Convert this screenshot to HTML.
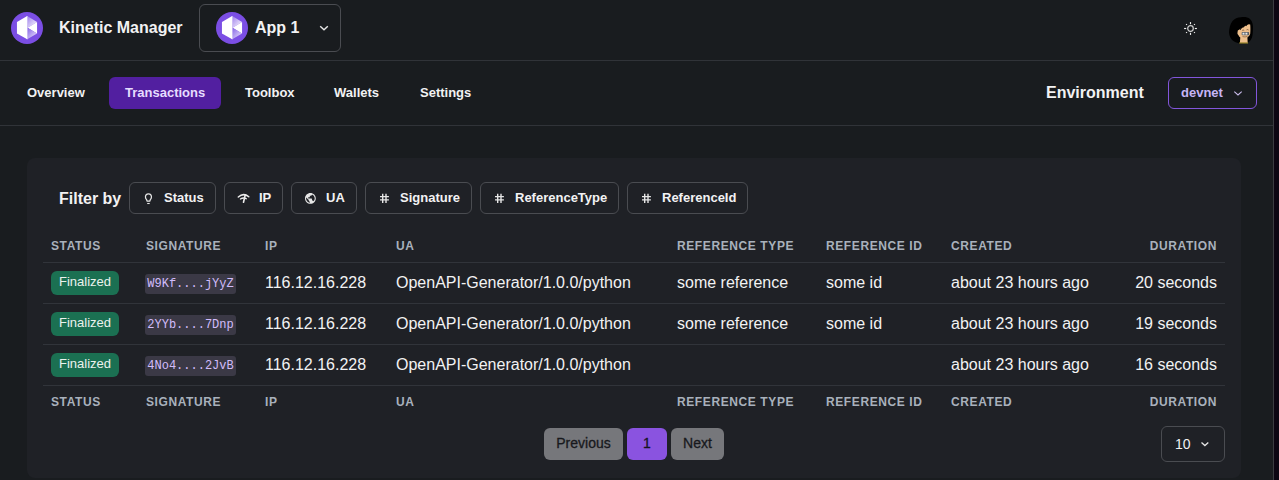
<!DOCTYPE html>
<html>
<head>
<meta charset="utf-8">
<style>
*{box-sizing:border-box;margin:0;padding:0}
html,body{width:1279px;height:480px;overflow:hidden;background:#0c0612}
body{font-family:"Liberation Sans",sans-serif;color:#f2f2f3;position:relative}
#app{position:absolute;left:0;top:0;width:1274px;height:480px;background:#191c1f;border-right:1px solid #3a3b40}
.abs{position:absolute}
.hline{position:absolute;left:0;width:1273px;height:1px;background:#303338}
.logo{position:absolute;width:32px;height:32px}
.title{position:absolute;left:59px;top:19px;font-size:16px;font-weight:700;line-height:18px;white-space:nowrap}
.appbox{position:absolute;left:199px;top:4px;width:142px;height:48px;border:1px solid #4a4c51;border-radius:6px}
.tab{position:absolute;top:77px;height:32px;line-height:31px;font-size:13px;font-weight:700;padding:0 16px;border-radius:6px;white-space:nowrap;color:#f2f2f3}
.tab.active{background:#521fa0;color:#e6dcff}
.env{position:absolute;left:1046px;top:84px;font-size:16px;font-weight:700;line-height:18px}
.devnet{position:absolute;left:1168px;top:77px;width:89px;height:32px;border:1px solid #8356dc;border-radius:6px;color:#c6b5f6;font-size:13px;font-weight:700;line-height:30px;padding-left:12px}
.card{position:absolute;left:27px;top:158px;width:1214px;height:320px;background:#1f2126;border-radius:8px}
.filterby{position:absolute;left:32px;top:32px;font-size:16px;font-weight:700;line-height:18px}
.fbtn{position:absolute;top:24px;height:32px;border:1px solid #4a4c51;border-radius:6px;font-size:13px;font-weight:700;line-height:30px;padding-left:34px;white-space:nowrap}
.fbtn svg{position:absolute;left:12px;top:8px;width:14px;height:14px}
table{position:absolute;left:16px;top:72px;width:1182px;border-collapse:collapse;table-layout:fixed}
th{font-size:12px;font-weight:700;text-transform:uppercase;letter-spacing:0.05em;color:#a9b1bc;line-height:16px;padding:8px;text-align:left;white-space:nowrap}
thead th{border-bottom:1px solid #31343a}
td{font-size:16px;padding:8px;height:41px;border-bottom:1px solid #31343a;white-space:nowrap;color:#f2f2f3;vertical-align:middle;line-height:24px}
.r{text-align:right}
.badge{display:inline-block;height:24px;line-height:22px;padding:0 8px;border-radius:6px;background:#1b7052;color:#ecf2ee;font-size:13px;vertical-align:top}
code{display:inline-block;font-family:"Liberation Mono",monospace;font-size:12px;letter-spacing:0;line-height:21px;height:20px;padding:0 2.3px;background:#3b3946;color:#d2bcfb;border-radius:3px;vertical-align:top;margin-top:3px;margin-left:-1px}
.pbtn{position:absolute;top:270px;height:32px;line-height:30px;font-size:14px;font-weight:400;border-radius:6px;text-align:center;color:#18191d;-webkit-text-stroke:0.3px #18191d}
.sel{position:absolute;left:1134px;top:268px;width:64px;height:36px;border:1px solid #4a4c51;border-radius:6px;font-size:14px;line-height:34px;padding-left:13px}
</style>
</head>
<body>
<div id="app">
  <!-- header -->
  <svg class="logo" style="left:11px;top:12px" viewBox="0 0 32 32">
    <defs>
      <linearGradient id="g1" x1="0" y1="0" x2="1" y2="1">
        <stop offset="0" stop-color="#9e80ec"/><stop offset="1" stop-color="#ffffff"/>
      </linearGradient>
      <linearGradient id="g2" x1="0" y1="0" x2="1" y2="1">
        <stop offset="0" stop-color="#8462e6"/><stop offset="1" stop-color="#f0eafd"/>
      </linearGradient>
    </defs>
    <circle cx="16" cy="16" r="16" fill="#7b4ee4"/>
    <polygon points="16.2,4.1 5.95,9.9 5.95,21.5 16.2,27.3" fill="#fff"/>
    <polygon points="16.2,4.1 26.05,9.9 16.6,15.7" fill="url(#g1)"/>
    <polygon points="16.6,15.7 26.05,9.9 26.05,21.5" fill="#fff"/>
    <polygon points="16.6,15.7 26.05,21.5 16.2,27.3" fill="url(#g2)"/>
    <line x1="16.2" y1="4.1" x2="16.2" y2="27.3" stroke="#fff" stroke-width="0.6"/>
  </svg>
  <div class="title">Kinetic Manager</div>
  <div class="appbox"></div>
  <svg class="logo" style="left:216px;top:12px" viewBox="0 0 32 32">
    <circle cx="16" cy="16" r="16" fill="#7b4ee4"/>
    <polygon points="16.2,4.1 5.95,9.9 5.95,21.5 16.2,27.3" fill="#fff"/>
    <polygon points="16.2,4.1 26.05,9.9 16.6,15.7" fill="url(#g1)"/>
    <polygon points="16.6,15.7 26.05,9.9 26.05,21.5" fill="#fff"/>
    <polygon points="16.6,15.7 26.05,21.5 16.2,27.3" fill="url(#g2)"/>
    <line x1="16.2" y1="4.1" x2="16.2" y2="27.3" stroke="#fff" stroke-width="0.6"/>
  </svg>
  <div class="abs" style="left:255px;top:19px;font-size:16px;font-weight:700;line-height:18px">App 1</div>
  <svg class="abs" style="left:318px;top:22px" width="12" height="12" viewBox="0 0 12 12"><path d="M2.2 4.2 L6 7.8 L9.8 4.2" fill="none" stroke="#e6e6e6" stroke-width="1.4"/></svg>
  <!-- sun -->
  <svg class="abs" style="left:1182px;top:20px" width="17" height="17" viewBox="0 0 17 17">
    <circle cx="8.5" cy="8.5" r="2.8" fill="none" stroke="#d0d0d0" stroke-width="1.2"/>
    <g stroke="#f2f2f2" stroke-width="1.15">
      <line x1="8.50" y1="4.20" x2="8.50" y2="2.10"/><line x1="12.04" y1="4.96" x2="12.88" y2="4.12"/><line x1="12.80" y1="8.50" x2="14.90" y2="8.50"/><line x1="12.04" y1="12.04" x2="12.88" y2="12.88"/><line x1="8.50" y1="12.80" x2="8.50" y2="14.90"/><line x1="4.96" y1="12.04" x2="4.12" y2="12.88"/><line x1="4.20" y1="8.50" x2="2.10" y2="8.50"/><line x1="4.96" y1="4.96" x2="4.12" y2="4.12"/>
    </g>
  </svg>
  <!-- avatar -->
  <svg class="abs" style="left:1226px;top:15px" width="30" height="32" viewBox="0 0 30 32">
    <path d="M15 2.2 C19 1.8 22 2.4 24 4 C26.5 6.5 27.3 10 27 13.5 C26.8 17 26.8 20 26 22.5 C25 25 23.5 26.8 21.5 27.8 L13 28.2 C10.5 27.8 8.5 27 7 25.8 C4.8 24 3.2 21 3 17.5 C3 14 4.2 9 6.5 6 C8.5 3.6 11.5 2.4 15 2.2 Z" fill="#000"/>
    <path d="M11.8 15.6 C14.5 14 17.5 12 20.5 10.3 L22.8 9.3 L24.2 9.6 C24.5 12.5 24.5 16 24.2 18.8 C23.8 20.3 23 21.2 21.4 22.4 L21.7 27.7 L13.9 27.7 L14.3 22.4 C13.4 21.8 12.8 21 12.5 20.2 C11.6 19.3 11.3 18.3 11.5 17.4 Z" fill="#eebf8c"/>
    <path d="M14 15 L15.5 13.5 M17 12.3 L18 11.5 M20 10.8 L21 10.3" stroke="#000" stroke-width="0.7"/>
    <path d="M16.2 15.4 Q17.2 14.6 18.2 15.5 M20.6 14.8 Q21.6 14.2 22.6 15" stroke="#4a3020" stroke-width="0.6" fill="none"/>
    <rect x="15.7" y="17.1" width="7.4" height="3.1" rx="0.6" fill="#5a5e63"/>
    <rect x="16.5" y="17.7" width="2" height="1.9" fill="#e8eaec"/>
    <rect x="19.4" y="17.7" width="2" height="1.9" fill="#e8eaec"/>
    <path d="M16.5 21.6 Q19 22.4 21.5 21.4" stroke="#6a4a30" stroke-width="0.6" fill="none"/>
    <path d="M13.2 28 L22.1 28" stroke="#bca52a" stroke-width="0.9"/>
  </svg>
  <div class="hline" style="top:60px"></div>

  <!-- nav -->
  <div class="tab" style="left:11px">Overview</div>
  <div class="tab active" style="left:109px">Transactions</div>
  <div class="tab" style="left:229px">Toolbox</div>
  <div class="tab" style="left:318px">Wallets</div>
  <div class="tab" style="left:404px">Settings</div>
  <div class="env">Environment</div>
  <div class="devnet">devnet
    <svg class="abs" style="left:63px;top:9px" width="12" height="12" viewBox="0 0 12 12"><path d="M2.3 4.6 L6 7.9 L9.7 4.6" fill="none" stroke="#cbbdec" stroke-width="1.1"/></svg>
  </div>
  <div class="hline" style="top:125px"></div>

  <!-- card -->
  <div class="card">
    <div class="filterby">Filter by</div>
    <div class="fbtn" style="left:102px;width:87px">
      <svg viewBox="0 0 14 14"><path d="M4.7 8.8 C3.9 8.1 3.45 7.2 3.45 6.1 C3.45 4.3 4.8 2.85 6.45 2.85 C8.1 2.85 9.45 4.3 9.45 6.1 C9.45 7.2 9 8.1 8.2 8.8 L7.9 10 L5 10 Z" fill="none" stroke="#e6e6e6" stroke-width="1.25" stroke-linejoin="round"/><path d="M5.2 12.5 H7.7" stroke="#e6e6e6" stroke-width="1.1"/></svg>Status</div>
    <div class="fbtn" style="left:197px;width:59px">
      <svg viewBox="0 0 14 14"><path d="M1.3 6 Q6.5 1.3 11.8 5.8" fill="none" stroke="#ececec" stroke-width="1.5" stroke-linecap="round"/><path d="M3.4 8 Q6.4 6.1 9.4 7.8" fill="none" stroke="#ececec" stroke-width="1.3" stroke-linecap="round"/><path d="M8.2 4.1 L6.5 11.3" fill="none" stroke="#ececec" stroke-width="1.6" stroke-linecap="round"/></svg>IP</div>
    <div class="fbtn" style="left:264px;width:66px">
      <svg viewBox="0 0 14 14"><g transform="translate(-0.08,0.92) scale(0.54)"><path fill="#e6e6e6" d="M12 2C6.48 2 2 6.48 2 12s4.48 10 10 10 10-4.48 10-10S17.52 2 12 2zm-1 17.93c-3.95-.49-7-3.85-7-7.93 0-.62.08-1.21.21-1.79L9 15v1c0 1.1.9 2 2 2v1.93zm6.9-2.54c-.26-.81-1-1.39-1.9-1.39h-1v-3c0-.55-.45-1-1-1H8v-2h2c.55 0 1-.45 1-1V7h2c1.1 0 2-.9 2-2v-.41c2.93 1.19 5 4.06 5 7.41 0 2.08-.8 3.97-2.1 5.39z"/></g></svg>UA</div>
    <div class="fbtn" style="left:338px;width:107px">
      <svg viewBox="0 0 14 14"><path d="M4.7 2.8 V12 M8 2.8 V12 M2 5.6 H10.9 M2 8.9 H10.9" stroke="#e6e6e6" stroke-width="1.4"/></svg>Signature</div>
    <div class="fbtn" style="left:453px;width:139px">
      <svg viewBox="0 0 14 14"><path d="M4.7 2.8 V12 M8 2.8 V12 M2 5.6 H10.9 M2 8.9 H10.9" stroke="#e6e6e6" stroke-width="1.4"/></svg>ReferenceType</div>
    <div class="fbtn" style="left:600px;width:121px">
      <svg viewBox="0 0 14 14"><path d="M4.7 2.8 V12 M8 2.8 V12 M2 5.6 H10.9 M2 8.9 H10.9" stroke="#e6e6e6" stroke-width="1.4"/></svg>ReferenceId</div>

    <table>
      <colgroup><col style="width:95px"><col style="width:119px"><col style="width:131px"><col style="width:281px"><col style="width:149px"><col style="width:125px"><col style="width:157px"><col style="width:125px"></colgroup>
      <thead><tr><th>Status</th><th>Signature</th><th>IP</th><th>UA</th><th>Reference Type</th><th>Reference ID</th><th>Created</th><th class="r">Duration</th></tr></thead>
      <tbody>
        <tr><td><span class="badge">Finalized</span></td><td><code>W9Kf....jYyZ</code></td><td>116.12.16.228</td><td>OpenAPI-Generator/1.0.0/python</td><td>some reference</td><td>some id</td><td>about 23 hours ago</td><td class="r">20 seconds</td></tr>
        <tr><td><span class="badge">Finalized</span></td><td><code>2YYb....7Dnp</code></td><td>116.12.16.228</td><td>OpenAPI-Generator/1.0.0/python</td><td>some reference</td><td>some id</td><td>about 23 hours ago</td><td class="r">19 seconds</td></tr>
        <tr><td><span class="badge">Finalized</span></td><td><code>4No4....2JvB</code></td><td>116.12.16.228</td><td>OpenAPI-Generator/1.0.0/python</td><td></td><td></td><td>about 23 hours ago</td><td class="r">16 seconds</td></tr>
      </tbody>
      <tfoot><tr><th>Status</th><th>Signature</th><th>IP</th><th>UA</th><th>Reference Type</th><th>Reference ID</th><th>Created</th><th class="r">Duration</th></tr></tfoot>
    </table>

    <div class="pbtn" style="left:517px;width:79px;background:#76777b">Previous</div>
    <div class="pbtn" style="left:600px;width:40px;background:#8a53e0;color:#15121f">1</div>
    <div class="pbtn" style="left:644px;width:53px;background:#76777b">Next</div>
    <div class="sel">10
      <svg class="abs" style="left:37px;top:11px" width="12" height="12" viewBox="0 0 12 12"><path d="M2.5 4.6 L5.9 7.6 L9.3 4.6" fill="none" stroke="#e6e6e6" stroke-width="1.3"/></svg>
    </div>
  </div>
</div>
</body>
</html>
